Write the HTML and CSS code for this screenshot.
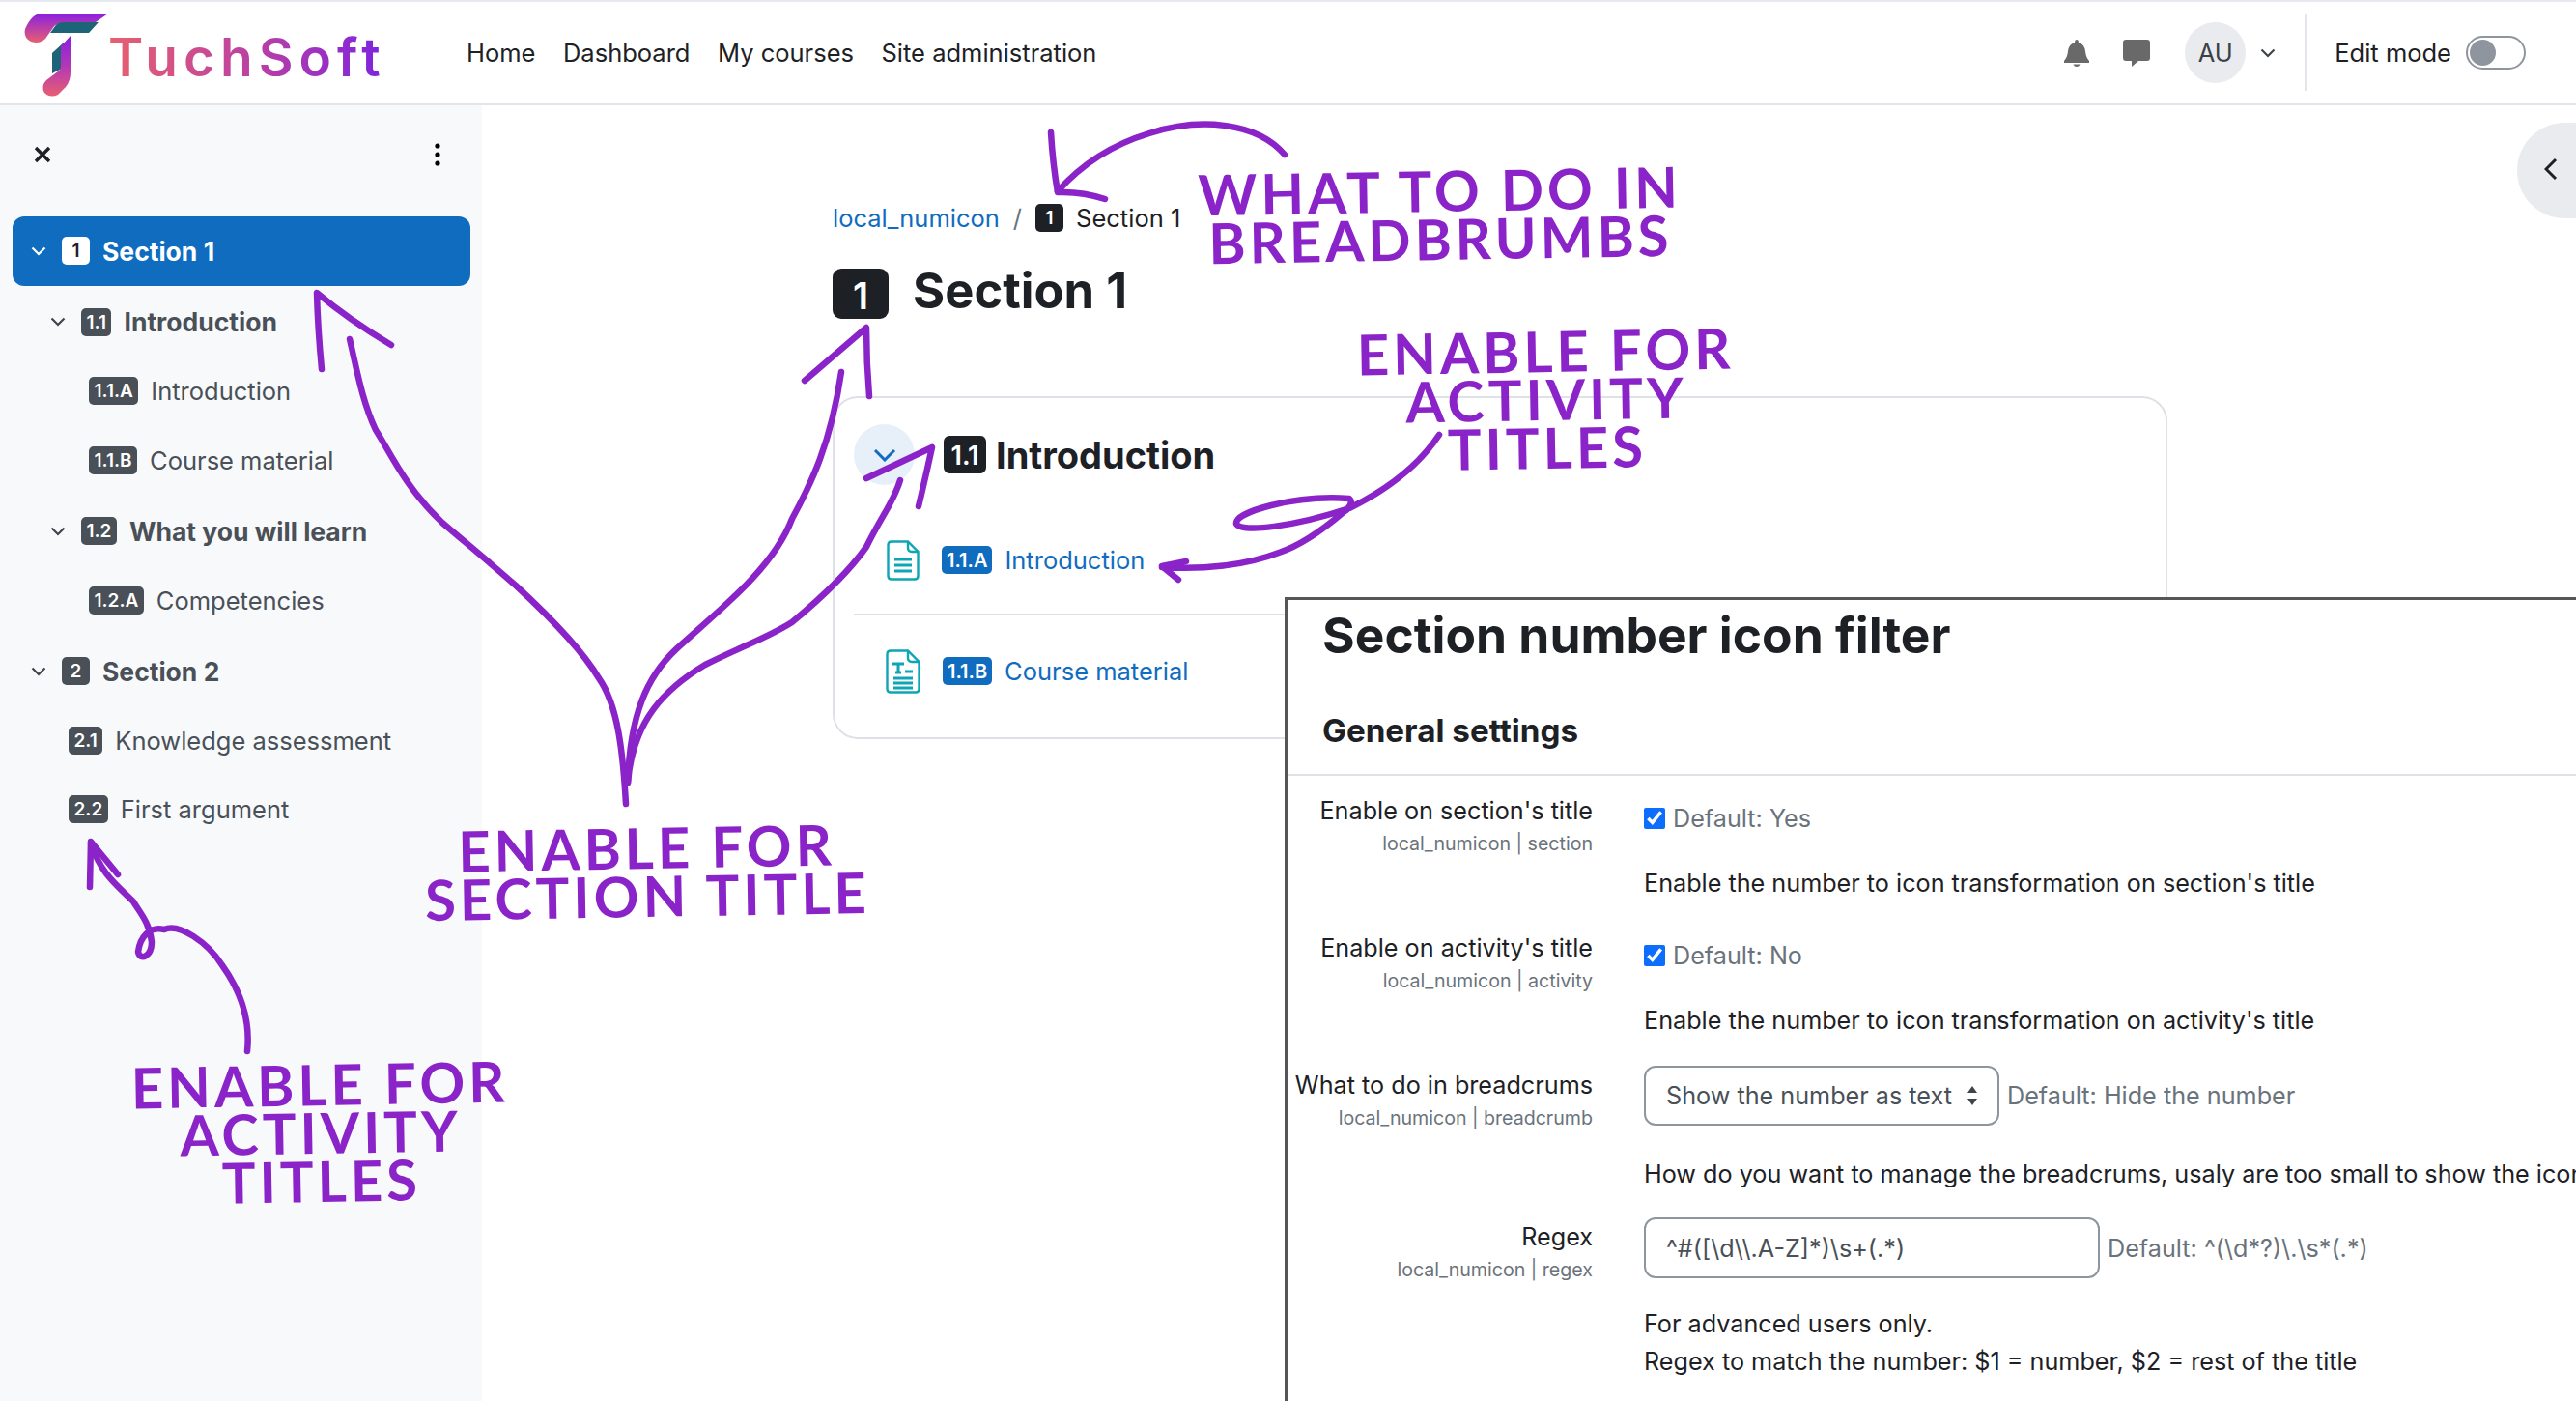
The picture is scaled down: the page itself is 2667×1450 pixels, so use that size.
FILE: index.html
```html
<!DOCTYPE html>
<html lang="en">
<head>
  <meta charset="UTF-8" />
  <title>Section 1</title>
  <link rel="stylesheet" href="styles.css">
</head>
<body>
  <header class="navbar">
    <a class="brand" href="#">
      <svg class="brand-mark" viewBox="25 12 90 90" width="90" height="90">
        <defs>
          <linearGradient id="logo-g" x1="0" y1="0" x2="0" y2="1">
            <stop offset="0" stop-color="#8a1fe0"/>
            <stop offset="1" stop-color="#e75f72"/>
          </linearGradient>
          <linearGradient id="stem-g" x1="0" y1="0" x2="0" y2="1">
            <stop offset="0" stop-color="#8a1fe0"/>
            <stop offset="0.55" stop-color="#b83bb0"/>
            <stop offset="1" stop-color="#e85f70"/>
          </linearGradient>
        </defs>
        <path fill="#1d6478" d="M60 23H102L92 34H52Z"/>
        <path fill="#1d6478" d="M66 44L54 55V76L66 70Z"/>
        <path fill="url(#logo-g)" d="M43 14H112L99 23H66Q58 23 54 30L47 40Q41 46 32 43Q24 39 26 30Q33 14 43 14Z"/>
        <path fill="url(#stem-g)" d="M73 37V75Q73 84 68 90L60 98Q52 102 46 96Q42 89 48 83L60 74Q63 72 63 68V48Z"/>
      </svg>
      <span class="brand-name">TuchSoft</span>
    </a>
    <nav class="main-nav">
      <a href="#">Home</a>
      <a href="#">Dashboard</a>
      <a href="#">My courses</a>
      <a href="#">Site administration</a>
    </nav>
    <div class="user-nav">
      <svg class="bell" viewBox="0 0 26 28" width="26" height="28">
        <path fill="#696969" d="M13 0q2 0 2 3q6 1.500 7 9q.5 6 4 10v2H0v-2q3.500-4 4-10q1-7.500 7-9q0-3 2-3ZM9.500 25.500h7q-1 2.500-3.500 2.500t-3.500-2.500Z"/>
      </svg>
      <svg class="msg" viewBox="0 0 28 28" width="28" height="28">
        <path fill="#696969" d="M3 0H25Q28 0 28 3V19Q28 22 25 22H16L9 28V22H3Q0 22 0 19V3Q0 0 3 0Z"/>
      </svg>
      <div class="avatar">AU</div>
      <svg class="caret" viewBox="0 0 16 10" width="16" height="10"><path d="M1.500 1.500L8 8L14.500 1.500"/></svg>
      <span class="nav-divider"></span>
      <span class="edit-label">Edit mode</span>
      <span class="toggle"><span class="knob"></span></span>
    </div>
  </header>

  <div class="layout">
    <aside class="drawer">
      <div class="drawer-top">
        <svg class="close-icon" viewBox="0 0 18 18" width="18" height="18"><path d="M2 2L16 16M16 2L2 16"/></svg>
        <svg viewBox="0 0 6 24" width="6" height="24"><circle cx="3" cy="3" r="2.600"/><circle cx="3" cy="12" r="2.600"/><circle cx="3" cy="21" r="2.600"/></svg>
      </div>
      <ul class="course-index">
        <li class="row row-head lvl-0 active">
          <svg class="chev" viewBox="0 0 16 10" width="16" height="10"><path d="M1.500 1.500L8 8L14.500 1.500"/></svg>
          <span class="badge badge-light">1</span><span>Section 1</span>
        </li>
        <li class="row row-head lvl-1">
          <svg class="chev" viewBox="0 0 16 10" width="16" height="10"><path d="M1.500 1.500L8 8L14.500 1.500"/></svg>
          <span class="badge">1.1</span><span>Introduction</span>
        </li>
        <li class="row lvl-2"><span class="badge">1.1.A</span><span>Introduction</span></li>
        <li class="row lvl-2"><span class="badge">1.1.B</span><span>Course material</span></li>
        <li class="row row-head lvl-1">
          <svg class="chev" viewBox="0 0 16 10" width="16" height="10"><path d="M1.500 1.500L8 8L14.500 1.500"/></svg>
          <span class="badge">1.2</span><span>What you will learn</span>
        </li>
        <li class="row lvl-2"><span class="badge">1.2.A</span><span>Competencies</span></li>
        <li class="row row-head lvl-0">
          <svg class="chev" viewBox="0 0 16 10" width="16" height="10"><path d="M1.500 1.500L8 8L14.500 1.500"/></svg>
          <span class="badge">2</span><span>Section 2</span>
        </li>
        <li class="row lvl-3"><span class="badge">2.1</span><span>Knowledge assessment</span></li>
        <li class="row lvl-3"><span class="badge">2.2</span><span>First argument</span></li>
      </ul>
    </aside>

    <main class="content">
      <div class="breadcrumb">
        <a href="#">local_numicon</a>
        <span class="sep">/</span>
        <span class="badge badge-dark">1</span>
        <span>Section 1</span>
      </div>
      <h1 class="page-title"><span class="badge-h1">1</span><span class="title-text">Section 1</span></h1>

      <section class="section-card">
        <div class="section-head">
          <span class="collapse-btn">
            <svg viewBox="0 0 24 14" width="24" height="14"><path d="M2 2L12 12L22 2"/></svg>
          </span>
          <span class="badge-h3">1.1</span>
          <h3>Introduction</h3>
        </div>
        <div class="activity">
          <svg class="doc-icon" viewBox="0 0 34 42" width="34" height="42">
            <path d="M5 1.500H22L32.500 12V37Q32.500 40.500 29 40.500H5Q1.500 40.500 1.500 37V5Q1.500 1.500 5 1.500Z"/>
            <path d="M22 1.500V8Q22 12 26 12H32.500"/>
            <path class="thick" d="M8 20H26M8 26H26M8 32H26"/>
          </svg>
          <span class="badge badge-blue">1.1.A</span>
          <a href="#">Introduction</a>
        </div>
        <div class="activity activity-b">
          <svg class="doc-icon" viewBox="0 0 36 46" width="36" height="46">
            <path d="M5 1.500H23L34.500 13V41Q34.500 44.500 31 44.500H5Q1.500 44.500 1.500 41V5Q1.500 1.500 5 1.500Z"/>
            <path d="M23 1.500V9Q23 13 27 13H34.500"/>
            <path class="thick" d="M7 15H19M13 15V24M10 24H16M20 23H28M8 30H28M8 35H28M8 40H28"/>
          </svg>
          <span class="badge badge-blue">1.1.B</span>
          <a href="#">Course material</a>
        </div>
      </section>
    </main>
  </div>

  <button class="right-toggle">
    <svg viewBox="0 0 14 24" width="14" height="24"><path d="M12 2L2 12L12 22"/></svg>
  </button>

  <section class="settings-panel">
    <h2 class="panel-title">Section number icon filter</h2>
    <h3 class="panel-sub">General settings</h3>

    <div class="setting">
      <div class="setting-label">
        <div>Enable on section's title</div>
        <small>local_numicon | section</small>
      </div>
      <div class="setting-body">
        <div class="control control-check">
          <input type="checkbox" checked>
          <span class="muted">Default: Yes</span>
        </div>
        <p>Enable the number to icon transformation on section's title</p>
      </div>
    </div>

    <div class="setting">
      <div class="setting-label">
        <div>Enable on activity's title</div>
        <small>local_numicon | activity</small>
      </div>
      <div class="setting-body">
        <div class="control control-check">
          <input type="checkbox" checked>
          <span class="muted">Default: No</span>
        </div>
        <p>Enable the number to icon transformation on activity's title</p>
      </div>
    </div>

    <div class="setting setting-compact">
      <div class="setting-label">
        <div>What to do in breadcrums</div>
        <small>local_numicon | breadcrumb</small>
      </div>
      <div class="setting-body">
        <div class="control control-field">
          <span class="select-wrap">
            <select><option>Show the number as text</option></select>
            <svg viewBox="0 0 12 22" width="12" height="22"><path d="M6 1L11 8H1ZM6 21L1 14H11Z"/></svg>
          </span>
          <span class="muted">Default: Hide the number</span>
        </div>
        <p class="nowrap">How do you want to manage the breadcrums, usaly are too small to show the icon</p>
      </div>
    </div>

    <div class="setting">
      <div class="setting-label">
        <div>Regex</div>
        <small>local_numicon | regex</small>
      </div>
      <div class="setting-body">
        <div class="control control-field">
          <input class="text-field" type="text" value="^#([\d\\.A-Z]*)\s+(.*)">
          <span class="muted">Default: ^(\d*?)\.\s*(.*)</span>
        </div>
        <p class="tight">For advanced users only.<br>Regex to match the number: $1 = number, $2 = rest of the title</p>
      </div>
    </div>
  </section>

  <!-- anotacoes por cima da tela -->
  <svg class="marks" viewBox="0 0 2667 1450" width="2667" height="1450">
    <path d="M1330 160C1300 125 1240 122 1190 138C1150 150 1120 170 1095 198"/>
    <path d="M1088 137Q1090 170 1095 199Q1120 198 1144 206"/>

    <path d="M648 832C645 780 640 730 620 702C600 668 560 630 534 606C500 576 480 560 458 541C420 505 405 470 389 445C375 415 370 385 362 351"/>
    <path d="M333 382Q329 340 328 303Q360 330 405 357"/>

    <path d="M650 810C652 740 670 700 700 672C740 635 800 590 820 537C840 500 860 460 871 385"/>
    <path d="M833 394L897 339Q897 375 900 410"/>

    <path d="M650 810C655 745 690 712 730 688C770 668 795 660 820 644C855 615 880 590 897 566C915 530 925 520 932 497"/>
    <path d="M897 495L965 463Q958 495 951 524"/>

    <path d="M1490 450C1470 480 1440 505 1397 526C1340 545 1285 552 1280 542C1278 530 1340 512 1397 516C1402 520 1395 528 1391 530C1370 548 1345 565 1324 572C1290 585 1245 590 1203 587"/>
    <path d="M1228 581L1203 586L1220 600"/>

    <path d="M256 1088C260 1050 245 1020 230 999C215 975 185 955 170 962C155 958 145 970 143 985C145 995 157 990 157 975C155 955 145 945 138 933C120 915 105 905 94 873"/>
    <path d="M93 918L94 871L122 905"/>
  </svg>

  <div class="note note-crumbs">WHAT TO DO IN<br>BREADBRUMBS</div>
  <div class="note note-act-top">ENABLE FOR<br>ACTIVITY<br>TITLES</div>
  <div class="note note-section">ENABLE FOR<br>SECTION TITLE</div>
  <div class="note note-act-low">ENABLE FOR<br>ACTIVITY<br>TITLES</div>
</body>
</html>
```

FILE: styles.css
```css
body {
  font-family: Inter, 'Noto Sans', sans-serif;
  font-size: 25.5px;
  color: #1d2125;
  background-color: #fff;
  margin: 0;
  height: 1450px;
  overflow: hidden;
  position: relative;
}

a {
  text-decoration: none;
  color: #0f6cbf;
}

.navbar {
  display: flex;
  align-items: center;
  height: 105px;
  padding: 0 52px 0 25px;
  border-top: 2px solid #e6e9ef;
  border-bottom: 2px solid #e2e5e9;
}

.brand {
  display: flex;
  align-items: center;
  width: 390px;
  height: 100%;
}

.brand-mark {
  flex: none;
  margin-top: 4px;
  margin-right: -3px;
}

.brand-name {
  font-size: 55px;
  font-weight: 600;
  letter-spacing: 6px;
  line-height: 64px;
  margin-top: 8px;
  background: linear-gradient(90deg, #e8606f 0%, #b83fa6 55%, #7d22e0 100%);
  -webkit-background-clip: text;
  background-clip: text;
  color: transparent;
}

.main-nav {
  display: flex;
  gap: 28.500px;
  margin-left: 68px;
}

.main-nav a {
  color: #1d2125;
}

.user-nav {
  display: flex;
  align-items: center;
  margin-left: auto;
  height: 100%;
}

.msg {
  margin-left: 35px;
  margin-right: 36px;
}

.avatar {
  width: 63px;
  height: 63px;
  line-height: 63px;
  border-radius: 50%;
  text-align: center;
  background-color: #e9ebee;
  color: #3b4148;
}

.caret {
  margin-left: 15px;
}

.caret path, .chev path {
  fill: none;
  stroke: #3f454b;
  stroke-width: 2.2;
}

.nav-divider {
  width: 2px;
  height: 79px;
  background-color: #e2e5e9;
  margin-left: 30px;
  margin-right: 29px;
}

.toggle {
  display: block;
  box-sizing: border-box;
  width: 62px;
  height: 35px;
  border: 2px solid #8f959e;
  border-radius: 18px;
  margin-left: 15px;
  padding: 2px;
}

.knob {
  display: block;
  width: 27px;
  height: 27px;
  border-radius: 50%;
  background-color: #8f959e;
}

.layout {
  display: flex;
  height: 1341px;
}

.drawer {
  flex: none;
  width: 499px;
  background-color: #f8f9fb;
}

.drawer-top {
  display: flex;
  justify-content: space-between;
  align-items: center;
  height: 102px;
  padding: 0 43px 0 35px;
  margin-bottom: 13px;
}

.close-icon path {
  stroke: #1d2125;
  stroke-width: 3.4;
}

.course-index {
  list-style: none;
  margin: 0 12px 0 13px;
  padding: 0;
  color: #495057;
}

.row {
  display: flex;
  align-items: center;
  height: 71.500px;
  gap: 13px;
}

.row-head {
  font-size: 26.500px;
  font-weight: 700;
  margin-top: 2px;
}

.row-head .badge {
  margin-left: 3px;
}

.chev {
  flex: none;
}

.lvl-0 {
  padding-left: 19px;
}

.lvl-1 {
  padding-left: 39px;
}

.lvl-2 {
  padding-left: 79px;
}

.lvl-3 {
  padding-left: 58px;
}

.row.active {
  background-color: #0f6cbf;
  color: #fff;
  border-radius: 12px;
  margin-top: 0;
}

.active .chev path {
  stroke: #fff;
}

.badge {
  flex: none;
  box-sizing: border-box;
  min-width: 29px;
  height: 29px;
  line-height: 30px;
  padding: 0 5.500px;
  border-radius: 5px;
  text-align: center;
  font-size: 19px;
  font-weight: 600;
  color: #fff;
  background-color: #495057;
}

.badge-light {
  background-color: #fff;
  color: #1d2125;
}

.badge-dark {
  background-color: #1d2125;
}

.badge-blue {
  background-color: #0f6cbf;
}

.content {
  flex: 1;
  padding: 101px 0 0 363px;
}

.breadcrumb {
  display: flex;
  align-items: center;
  height: 30px;
  gap: 13px;
}

.sep {
  color: #6a737b;
  margin: 0 1px;
}

.page-title {
  display: flex;
  align-items: center;
  gap: 25px;
  margin: 38px 0 80px;
  height: 52px;
  font-size: 50.700px;
  font-weight: 700;
}

.title-text {
  margin-bottom: 8px;
}

.badge-h1 {
  width: 58px;
  height: 52px;
  line-height: 56px;
  border-radius: 9px;
  text-align: center;
  font-size: 38px;
  font-weight: 600;
  color: #fff;
  background-color: #1d2125;
}

.section-card {
  box-sizing: border-box;
  width: 1382px;
  height: 355px;
  border: 2px solid #dee2e6;
  border-radius: 26px;
  padding: 27px 0 0 20px;
}

.section-head {
  display: flex;
  align-items: center;
  height: 63px;
}

.section-head h3 {
  margin: 0 0 0 10px;
  font-size: 38px;
  font-weight: 700;
}

.collapse-btn {
  display: flex;
  align-items: center;
  justify-content: center;
  width: 63px;
  height: 63px;
  border-radius: 50%;
  background-color: #e7f0f9;
  margin-right: 30px;
}

.collapse-btn path {
  fill: none;
  stroke: #0f6cbf;
  stroke-width: 3;
}

.badge-h3 {
  width: 44px;
  height: 39px;
  line-height: 41px;
  border-radius: 6px;
  text-align: center;
  font-size: 27px;
  font-weight: 600;
  color: #fff;
  background-color: #1d2125;
}

.activity {
  display: flex;
  align-items: center;
  gap: 13px;
  box-sizing: border-box;
  width: 449px;
  height: 135px;
  padding: 22px 0 0 34px;
  border-bottom: 2px solid #dee2e6;
}

.activity-b {
  border-bottom: none;
  height: 115px;
  padding: 0 0 0 33px;
}

.activity .badge {
  font-size: 20px;
  padding: 0 5px;
}

.doc-icon {
  flex: none;
  margin-right: 10px;
}

.doc-icon path {
  fill: none;
  stroke: #0ea5b5;
  stroke-width: 2.4;
}

.doc-icon .thick {
  stroke-width: 3;
}

.right-toggle {
  position: absolute;
  top: 127px;
  right: 0;
  width: 61px;
  height: 99px;
  padding: 0 0 0 9px;
  border: none;
  border-radius: 50px 0 0 50px;
  background-color: #e9ebee;
}

.right-toggle path {
  fill: none;
  stroke: #1d2125;
  stroke-width: 3;
}

.settings-panel {
  position: absolute;
  left: 1330px;
  top: 618px;
  right: 0;
  bottom: 0;
  overflow: hidden;
  box-sizing: border-box;
  background-color: #fff;
  font-size: 25.200px;
  border-left: 3px solid #565656;
  border-top: 3px solid #565656;
}

.panel-title {
  margin: 0;
  padding-left: 36px;
  height: 70px;
  line-height: 72px;
  font-size: 51.500px;
  font-weight: 700;
}

.panel-sub {
  margin: 0 0 19px;
  padding: 44px 0 24px 36px;
  height: 42px;
  line-height: 42px;
  font-size: 33.200px;
  font-weight: 700;
  border-bottom: 2px solid #dee2e6;
}

.setting {
  display: grid;
  grid-template-columns: 316px 1fr;
  column-gap: 53px;
  line-height: 34px;
  padding-bottom: 33px;
}

.setting-compact {
  padding-bottom: 31px;
}

.setting-label {
  text-align: right;
}

.setting-label small {
  display: block;
  font-size: 19.600px;
  color: #6a737b;
}

.control {
  display: flex;
  align-items: center;
  gap: 8px;
}

.control-check {
  margin-top: 8px;
}

.control-check input {
  width: 22px;
  height: 22px;
  margin: 0;
  accent-color: #0d6efd;
}

.control-field {
  margin-top: -3px;
}

.muted {
  color: #6a737b;
}

.setting-body p {
  margin: 33px 0 0;
}

.nowrap {
  white-space: nowrap;
}

.setting-body .tight {
  line-height: 39px;
  margin-top: 28px;
}

.select-wrap {
  position: relative;
  display: block;
}

.select-wrap select {
  display: block;
  appearance: none;
  box-sizing: border-box;
  width: 368px;
  height: 62px;
  padding: 0 0 0 21px;
  border: 2px solid #8f959e;
  border-radius: 12px;
  background-color: #fff;
  font-family: inherit;
  font-size: 25.200px;
  color: #495057;
}

.select-wrap svg {
  position: absolute;
  right: 22px;
  top: 20px;
  fill: #3f454b;
}

.text-field {
  box-sizing: border-box;
  width: 472px;
  height: 63px;
  padding: 0 0 0 21px;
  border: 2px solid #8f959e;
  border-radius: 12px;
  font-family: inherit;
  font-size: 25.200px;
  color: #495057;
}

.marks {
  position: absolute;
  left: 0;
  top: 0;
  pointer-events: none;
}

.marks path {
  fill: none;
  stroke: #8a24c8;
  stroke-width: 6.500;
  stroke-linecap: round;
  stroke-linejoin: round;
}

.note {
  position: absolute;
  font-family: Lato, sans-serif;
  font-size: 58px;
  font-weight: 700;
  line-height: 50px;
  letter-spacing: 4px;
  text-align: center;
  white-space: nowrap;
  color: #8a24c8;
  transform: translateX(-50%) rotate(-1deg);
}

.note-crumbs {
  left: 1491px;
  top: 172px;
}

.note-act-top {
  left: 1601px;
  top: 338px;
}

.note-section {
  left: 670px;
  top: 852px;
}

.note-act-low {
  left: 332px;
  top: 1097px;
}
```
